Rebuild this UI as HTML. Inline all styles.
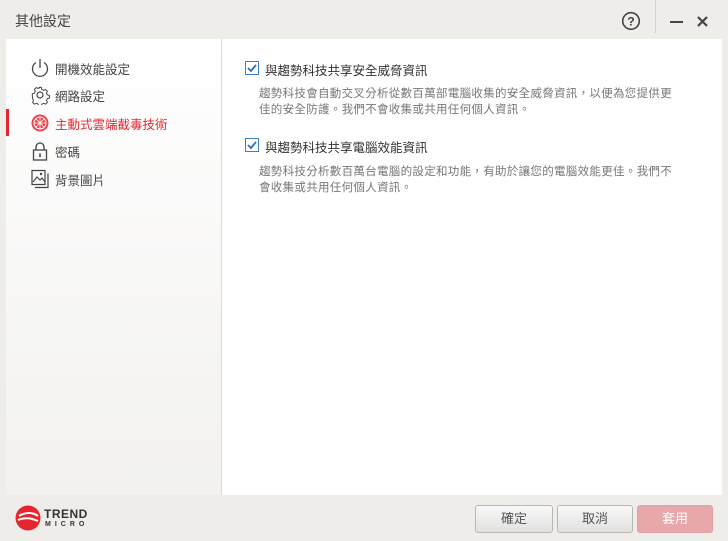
<!DOCTYPE html>
<html><head><meta charset="utf-8"><style>
*{margin:0;padding:0;box-sizing:border-box}
body{width:728px;height:541px;background:#efedea;font-family:"Liberation Sans","Noto Sans CJK TC",sans-serif;position:relative;overflow:hidden;color:#333}
.title{position:absolute;left:15px;top:11px;font-size:14px;color:#444}
.vsep{position:absolute;left:655px;top:0;width:1px;height:33px;background:#d4d2cf}
.panel{position:absolute;left:6px;top:39px;width:716px;height:456px;background:#fff}
.side{position:absolute;left:0;top:0;width:216px;height:456px;background:linear-gradient(#fff,#f2f1ef);border-right:1px solid #dcdad7}
.item{position:absolute;left:24px;height:20px;font-size:12.5px;color:#444;display:flex;align-items:center}
.item svg{width:20px;height:20px;margin-right:5px}
.red{color:#e5262e}
.bar{position:absolute;left:0;top:70px;width:3px;height:27px;background:#e5262e}
.cb{position:absolute;left:239px;width:14px;height:14px;border:1px solid #3a7fc8;background:#fff}
.cbt{position:absolute;left:259px;font-size:12.5px;color:#333}
.desc{position:absolute;left:253px;font-size:11.5px;color:#777;line-height:16px;width:418px;letter-spacing:0.3px}
.btn{position:absolute;top:505px;height:28px;border:1px solid #b9b7b4;border-radius:3px;background:linear-gradient(#f8f8f8,#e2e1df);font-size:13px;color:#555;text-align:center;line-height:26px}
</style></head><body>
<div class="title">其他設定</div>
<svg style="position:absolute;left:621px;top:11px" width="20" height="20" viewBox="0 0 20 20"><circle cx="10" cy="10" r="8.3" fill="none" stroke="#444" stroke-width="1.6"/><text x="10" y="14.5" font-size="12" font-weight="bold" text-anchor="middle" fill="#444" font-family="Liberation Sans">?</text></svg>
<div class="vsep"></div>
<div style="position:absolute;left:670px;top:21px;width:13px;height:2px;background:#444"></div>
<svg style="position:absolute;left:697px;top:16px" width="11" height="11" viewBox="0 0 11 11"><path d="M1 1L10 10M10 1L1 10" stroke="#444" stroke-width="2.2"/></svg>
<div class="panel">
<div class="side">
<div class="bar"></div>
<div class="item" style="top:19px"><svg viewBox="0 0 20 20"><path d="M6 4.5A7.5 7.5 0 1 0 14 4.5" fill="none" stroke="#444" stroke-width="1.3"/><path d="M10 1V10" stroke="#444" stroke-width="1.3"/></svg>開機效能設定</div>
<div class="item" style="top:46px"><svg viewBox="0 0 20 20"><circle cx="10" cy="10" r="3" fill="none" stroke="#444" stroke-width="1.2"/><path d="M8.5 1.5h3l.5 2.3 2 1 2.2-1 2 2-1 2.2 1 2 2.3.5v3l-2.3.5-1 2 1 2.2-2 2-2.2-1-2 1-.5 2.3h-3l-.5-2.3-2-1-2.2 1-2-2 1-2.2-1-2L1.5 11.5v-3l2.3-.5 1-2-1-2.2 2-2 2.2 1 2-1z" fill="none" stroke="#444" stroke-width="1.1" transform="scale(.9) translate(1.1 1.1)"/></svg>網路設定</div>
<div class="item red" style="top:74px"><svg viewBox="0 0 20 20"><circle cx="10" cy="10" r="8.5" fill="#e5262e" opacity=".85"/><circle cx="10" cy="10" r="6" fill="none" stroke="#fff" stroke-width="1"/><path d="M4 10h12M10 4v12M6 6l8 8M14 6l-8 8" stroke="#fff" stroke-width=".8"/></svg>主動式雲端截毒技術</div>
<div class="item" style="top:102px"><svg viewBox="0 0 20 20"><path d="M6 9V6a4 4 0 0 1 8 0v3" fill="none" stroke="#444" stroke-width="1.3"/><rect x="3.5" y="9" width="13" height="10" fill="none" stroke="#444" stroke-width="1.3"/><rect x="9.2" y="12.5" width="1.6" height="3.5" fill="#444"/></svg>密碼</div>
<div class="item" style="top:130px"><svg viewBox="0 0 20 20"><path d="M2 1.5h13v14H2z M5 18.5h13v-14" fill="none" stroke="#444" stroke-width="1.2"/><path d="M3 13l4-5 3 3 2-2 3 4" fill="none" stroke="#444" stroke-width="1.1"/><circle cx="11" cy="5" r="1.2" fill="#444"/></svg>背景圖片</div>
</div>
<div class="cb" style="top:22px"><svg width="12" height="12" viewBox="0 0 12 12" style="position:absolute;left:0;top:0"><path d="M2 6l3 3 5-6" fill="none" stroke="#2a6fbd" stroke-width="1.8"/></svg></div>
<div class="cbt" style="top:21px">與趨勢科技共享安全威脅資訊</div>
<div class="desc" style="top:47px">趨勢科技會自動交叉分析從數百萬部電腦收集的安全威脅資訊，以便為您提供更佳的安全防護。我們不會收集或共用任何個人資訊。</div>
<div class="cb" style="top:99px"><svg width="12" height="12" viewBox="0 0 12 12" style="position:absolute;left:0;top:0"><path d="M2 6l3 3 5-6" fill="none" stroke="#2a6fbd" stroke-width="1.8"/></svg></div>
<div class="cbt" style="top:98px">與趨勢科技共享電腦效能資訊</div>
<div class="desc" style="top:125px">趨勢科技分析數百萬台電腦的設定和功能，有助於讓您的電腦效能更佳。我們不會收集或共用任何個人資訊。</div>
</div>
<svg style="position:absolute;left:14px;top:504px" width="28" height="28" viewBox="0 0 28 28"><circle cx="14" cy="14" r="12.5" fill="#e5262e"/><path d="M5 12c6-4 14-4 19 0M4 16c7-3 13-2 20 1" stroke="#fff" stroke-width="2" fill="none"/></svg>
<div style="position:absolute;left:44px;top:508px;font-size:12px;font-weight:bold;color:#333;letter-spacing:0.5px;line-height:12px">TREND</div>
<div style="position:absolute;left:45px;top:521px;font-size:7px;font-weight:bold;color:#333;letter-spacing:4px">MICRO</div>
<div class="btn" style="left:475px;width:78px">確定</div>
<div class="btn" style="left:557px;width:76px">取消</div>
<div class="btn" style="left:637px;width:76px;background:#e8a7aa;border-color:#e3a0a3;color:#fff">套用</div>
</body></html>
